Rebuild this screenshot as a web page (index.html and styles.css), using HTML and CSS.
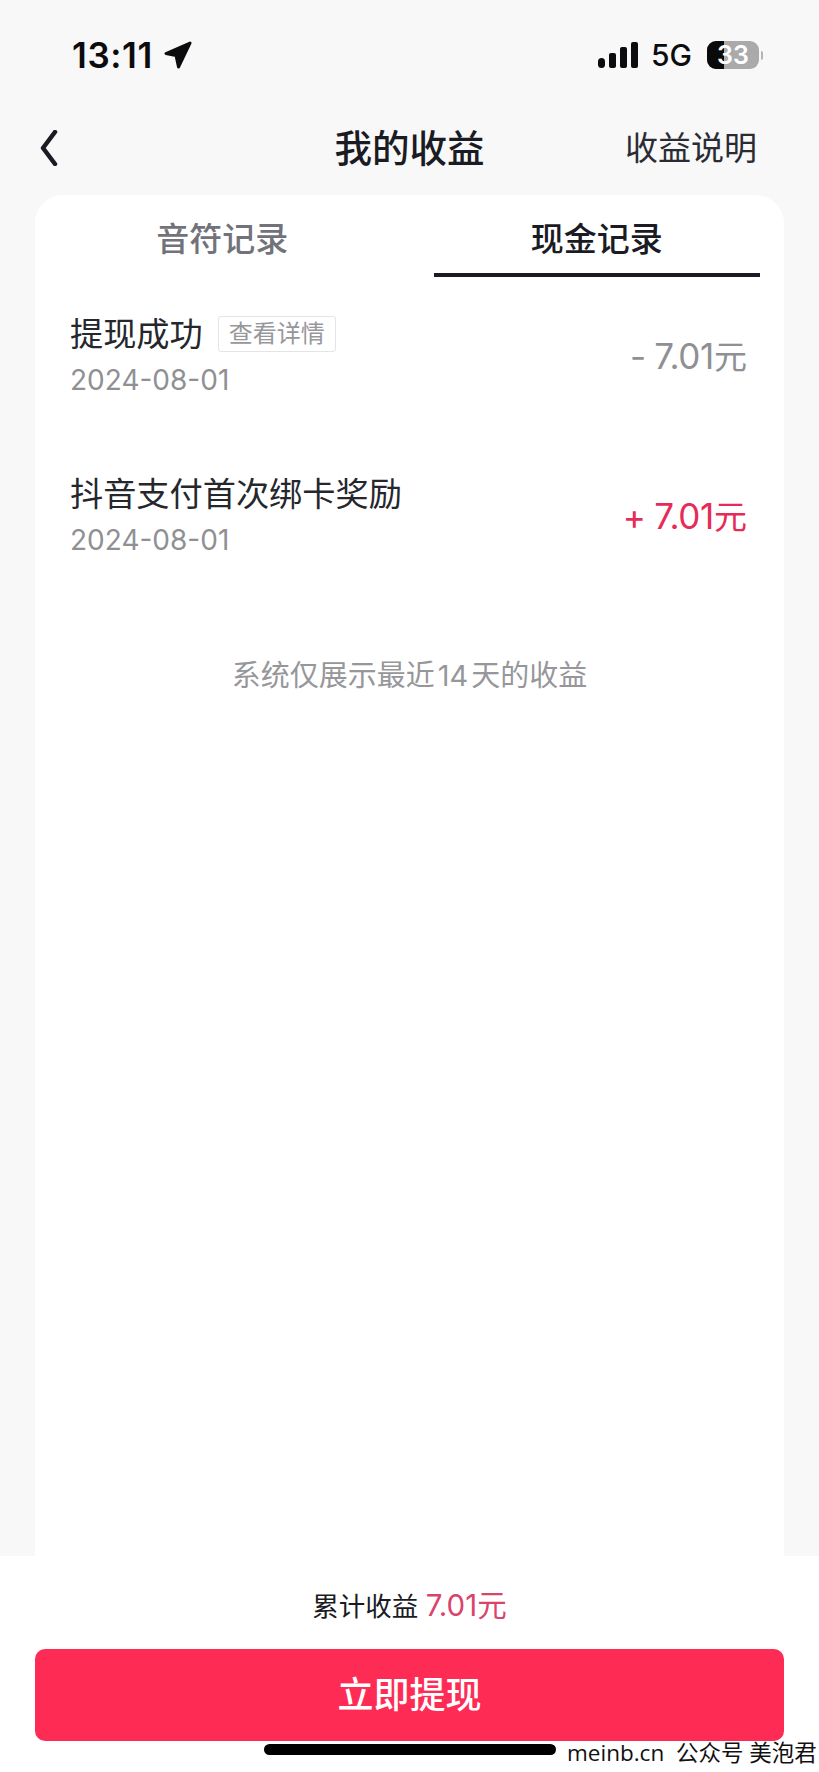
FILE: index.html
```html
<!DOCTYPE html>
<html lang="zh-CN">
<head>
    <meta charset="UTF-8">
    <meta name="viewport" content="width=device-width, initial-scale=1.0">
    <title>我的收益</title>
    <link rel="stylesheet" href="styles.css">
</head>
<body>
    <div class="page">
        <div class="status-bar">
            <div class="status-left">
                <span class="status-time">13:11</span>
                <svg class="status-arrow" width="28" height="28" viewBox="0 0 28 28">
                    <path d="M26 2 L2 12.5 L12 14.5 L14.5 26 Z" fill="#0c0c0e" stroke="#0c0c0e" stroke-width="3" stroke-linejoin="round"/>
                </svg>
            </div>
            <div class="status-right">
                <div class="signal">
                    <span class="signal-bar bar-1"></span>
                    <span class="signal-bar bar-2"></span>
                    <span class="signal-bar bar-3"></span>
                    <span class="signal-bar bar-4"></span>
                </div>
                <span class="network">5G</span>
                <div class="battery">
                    <div class="battery-level"></div>
                    <span class="battery-text">33</span>
                </div>
                <span class="battery-nub"></span>
            </div>
        </div>

        <div class="nav-bar">
            <svg class="back-icon" width="20" height="36" viewBox="0 0 20 36">
                <path d="M17 2 L5 18 L17 34" fill="none" stroke="#1a1b23" stroke-width="4.5" stroke-linecap="round" stroke-linejoin="round"/>
            </svg>
            <div class="nav-title">我的收益</div>
            <div class="nav-link">收益说明</div>
        </div>

        <div class="card">
            <div class="tabs">
                <div class="tab">音符记录</div>
                <div class="tab active">现金记录</div>
            </div>

            <div class="record">
                <div class="record-main">
                    <div class="record-title">
                        提现成功
                        <span class="tag">查看详情</span>
                    </div>
                    <div class="record-date">2024-08-01</div>
                </div>
                <div class="record-amount"><span class="amount-num">- 7.01</span>元</div>
            </div>

            <div class="record">
                <div class="record-main">
                    <div class="record-title">抖音支付首次绑卡奖励</div>
                    <div class="record-date">2024-08-01</div>
                </div>
                <div class="record-amount income"><span class="amount-num">+ 7.01</span>元</div>
            </div>

            <div class="notice">系统仅展示最近<span class="notice-num">14</span>天的收益</div>
        </div>

        <div class="footer">
            <div class="total">累计收益 <span class="total-value">7.01元</span></div>
            <div class="withdraw-btn">立即提现</div>
        </div>

        <div class="home-bar"></div>
        <div class="watermark">meinb.cn&nbsp; <span class="watermark-cn">公众号 美泡君</span></div>
    </div>
</body>
</html>
```

FILE: styles.css
```css
body {
    margin: 0;
    background-color: #f8f8f9;
    font-family: "Inter", "Noto Sans CJK SC", sans-serif;
    color: #1a1b23;
}

.page {
    position: relative;
    width: 819px;
    height: 1772px;
    display: flex;
    flex-direction: column;
    overflow: hidden;
}

.status-bar {
    height: 108px;
    flex-shrink: 0;
    display: flex;
    justify-content: space-between;
    align-items: flex-start;
    box-sizing: border-box;
    padding: 33px 56px 0 72px;
}

.status-left {
    display: flex;
    align-items: center;
    height: 44px;
    gap: 11px;
}

.status-time {
    font-size: 35px;
    font-weight: 600;
    letter-spacing: 0.6px;
    color: #0c0c0e;
}

.status-right {
    display: flex;
    align-items: center;
    height: 44px;
}

.signal {
    display: flex;
    align-items: flex-end;
    gap: 4px;
    height: 26px;
}

.signal-bar {
    width: 7px;
    background-color: #0c0c0e;
    border-radius: 2px;
}

.bar-1 { height: 10px; border-radius: 4px; }
.bar-2 { height: 15px; }
.bar-3 { height: 21px; }
.bar-4 { height: 26px; }

.network {
    margin-left: 13px;
    font-size: 30px;
    font-weight: 500;
    color: #0c0c0e;
}

.battery {
    position: relative;
    margin-left: 15px;
    width: 52px;
    height: 28px;
    border-radius: 9px;
    background-color: #aaaaaa;
    overflow: hidden;
}

.battery-level {
    width: 17px;
    height: 100%;
    background-color: #0a0a0a;
}

.battery-text {
    position: absolute;
    inset: 0;
    text-align: center;
    font-size: 25px;
    font-weight: 600;
    line-height: 28px;
    color: #fff;
}

.battery-nub {
    width: 2px;
    height: 9px;
    margin-left: 2px;
    background-color: #b5b5b5;
    border-radius: 0 2px 2px 0;
}

.nav-bar {
    height: 87px;
    flex-shrink: 0;
    display: flex;
    align-items: center;
    justify-content: space-between;
    box-sizing: border-box;
    padding: 0 62px 12px 38px;
    position: relative;
}

.back-icon {
    display: block;
    margin-top: 4px;
}

.nav-title {
    position: absolute;
    left: 0;
    right: 0;
    text-align: center;
    font-size: 37.5px;
    font-weight: 500;
    pointer-events: none;
}

.nav-link {
    font-size: 33px;
    color: #2b2c33;
}

.card {
    flex: 1;
    margin: 0 35px;
    background-color: #fff;
    border-radius: 28px 28px 0 0;
}

.tabs {
    display: grid;
    grid-template-columns: 1fr 1fr;
    padding: 0 24px;
    height: 82px;
    column-gap: 48px;
}

.tab {
    box-sizing: border-box;
    height: 82px;
    padding-top: 22px;
    font-size: 33px;
    font-weight: 500;
    text-align: center;
    line-height: 44px;
    color: #72737a;
}

.tab.active {
    color: #1a1b23;
    border-bottom: 4px solid #1a1b23;
}

.record {
    display: flex;
    justify-content: space-between;
    align-items: center;
    padding: 0 37px 4px 35px;
    height: 160px;
    box-sizing: border-box;
}

.record-title {
    display: flex;
    align-items: center;
    gap: 15px;
    font-size: 33.2px;
    line-height: 44px;
    color: #26272d;
}

.tag {
    font-size: 24px;
    line-height: 34px;
    padding: 0 10px;
    color: #97979b;
    border: 1px solid #e4e4e6;
    border-radius: 3px;
}

.record-date {
    margin-top: 6px;
    font-size: 28px;
    line-height: 36px;
    color: #8f9094;
}

.record-amount {
    font-size: 33px;
    color: #8f9094;
}

.amount-num {
    font-size: 35px;
    word-spacing: -1px;
    letter-spacing: -0.3px;
}

.record-amount.income {
    color: #e62b58;
}

.notice {
    margin-top: 55px;
    text-align: center;
    font-size: 29px;
    color: #97979b;
}

.notice-num {
    margin: 0 3px;
}

.footer {
    flex-shrink: 0;
    height: 216px;
    background-color: #fff;
    box-sizing: border-box;
    padding: 31px 35px 0;
}

.total {
    text-align: center;
    font-size: 26.5px;
    line-height: 36px;
    color: #1a1b23;
}

.total-value {
    color: #d9446c;
    font-size: 29.5px;
}

.withdraw-btn {
    margin-top: 25px;
    height: 92px;
    border-radius: 10px;
    background-color: #fe2c55;
    color: #fff;
    font-size: 36px;
    font-weight: 500;
    text-align: center;
    line-height: 92px;
}

.home-bar {
    position: absolute;
    left: 264px;
    top: 1744px;
    width: 292px;
    height: 11px;
    border-radius: 6px;
    background-color: #000;
}

.watermark {
    position: absolute;
    left: 567px;
    top: 1737px;
    white-space: nowrap;
    font-family: "Open Sans", "Noto Sans CJK SC", sans-serif;
    font-size: 22.5px;
    font-weight: 500;
    line-height: 32px;
    color: #111;
}

.watermark-cn {
    font-weight: 400;
}
```
